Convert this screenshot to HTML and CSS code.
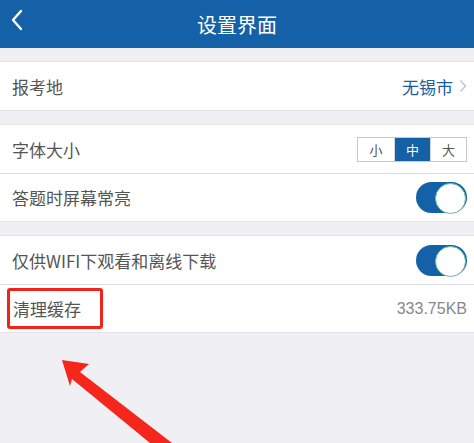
FILE: index.html
```html
<!DOCTYPE html>
<html>
<head>
	<title>设置界面</title>
	<link rel="stylesheet" href="styles.css">
</head>
<body>

<div class="header">
	<svg class="back" width="14" height="22" viewBox="0 0 14 22">
		<path d="M11 2 L3 11 L11 20" fill="none" stroke="#fff" stroke-width="2.4" stroke-linecap="round" stroke-linejoin="round"/>
	</svg>
	<div class="title">设置界面</div>
</div>

<div class="group">
	<div class="row">
		<span class="label">报考地</span>
		<span class="city">无锡市
			<svg class="more" width="8" height="14" viewBox="0 0 8 14">
				<path d="M1.5 1.5 L6.5 7 L1.5 12.5" fill="none" stroke="#c4c4c8" stroke-width="1.4"/>
			</svg>
		</span>
	</div>
</div>

<div class="group">
	<div class="row">
		<span class="label">字体大小</span>
		<div class="seg">
			<span class="seg-item">小</span>
			<span class="seg-item on">中</span>
			<span class="seg-item">大</span>
		</div>
	</div>
	<div class="row">
		<span class="label">答题时屏幕常亮</span>
		<span class="switch"></span>
	</div>
</div>

<div class="group">
	<div class="row">
		<span class="label">仅供WIFI下观看和离线下载</span>
		<span class="switch"></span>
	</div>
	<div class="row">
		<span class="label mark">清理缓存</span>
		<span class="size">333.75KB</span>
	</div>
</div>

<!-- 红色箭头 -->
<svg class="arrow" width="474" height="443" viewBox="0 0 474 443">
	<polygon points="62,360 89,364 80,372 172,443 150,443 72,379 70,386" fill="#f5261c"/>
</svg>

</body>
</html>
```

FILE: styles.css
```css
*{
	margin: 0;
	padding: 0;
	box-sizing: border-box;
}
body{
	width: 474px;
	height: 443px;
	overflow: hidden;
	background: #efeff4;
	font-family: "Noto Sans CJK SC", "Liberation Sans", sans-serif;
	position: relative;
}
.header{
	height: 48px;
	background: #1461a8;
	display: flex;
	align-items: center;
	justify-content: center;
	position: relative;
}
.header .back{
	position: absolute;
	left: 10px;
	top: 9px;
}
.title{
	color: #fff;
	font-size: 20px;
}
.group{
	margin-top: 13px;
	background: #fff;
	border-top: 1px solid #e4e4e8;
	border-bottom: 1px solid #e4e4e8;
}
.row{
	height: 48px;
	display: flex;
	align-items: center;
	justify-content: space-between;
	padding: 0 7px 0 12px;
}
.row + .row{
	border-top: 1px solid #dcdce0;
}
.label{
	font-size: 17px;
	color: #555;
}
.mark{
	/* 截图上的红框 */
	margin-left: -5px;
	padding: 5px 19px 5px 3px;
	border: 3px solid #f2231b;
	border-radius: 3px;
}
.city{
	font-size: 17px;
	color: #1b5c9c;
	display: flex;
	align-items: center;
}
.more{
	margin-left: 6px;
}
.seg{
	display: flex;
	border: 1px solid #c8c8cc;
	height: 25px;
}
.seg-item{
	width: 36px;
	display: flex;
	align-items: center;
	justify-content: center;
	font-size: 13px;
	color: #555;
	border-left: 1px solid #d4d4d8;
}
.seg-item:first-child{
	border-left: none;
}
.seg-item.on{
	background: #1461a8;
	color: #fff;
}
.switch{
	width: 51px;
	height: 31px;
	border-radius: 16px;
	background: #1461a8;
	position: relative;
}
.switch::after{
	content: "";
	position: absolute;
	right: 1px;
	top: 1px;
	width: 29px;
	height: 29px;
	border-radius: 50%;
	background: #fff;
	border: 1px solid #6fb9a0;
}
.size{
	font-size: 16px;
	color: #888;
	font-family: "Liberation Sans", sans-serif;
}
.arrow{
	position: absolute;
	left: 0;
	top: 0;
}
```
